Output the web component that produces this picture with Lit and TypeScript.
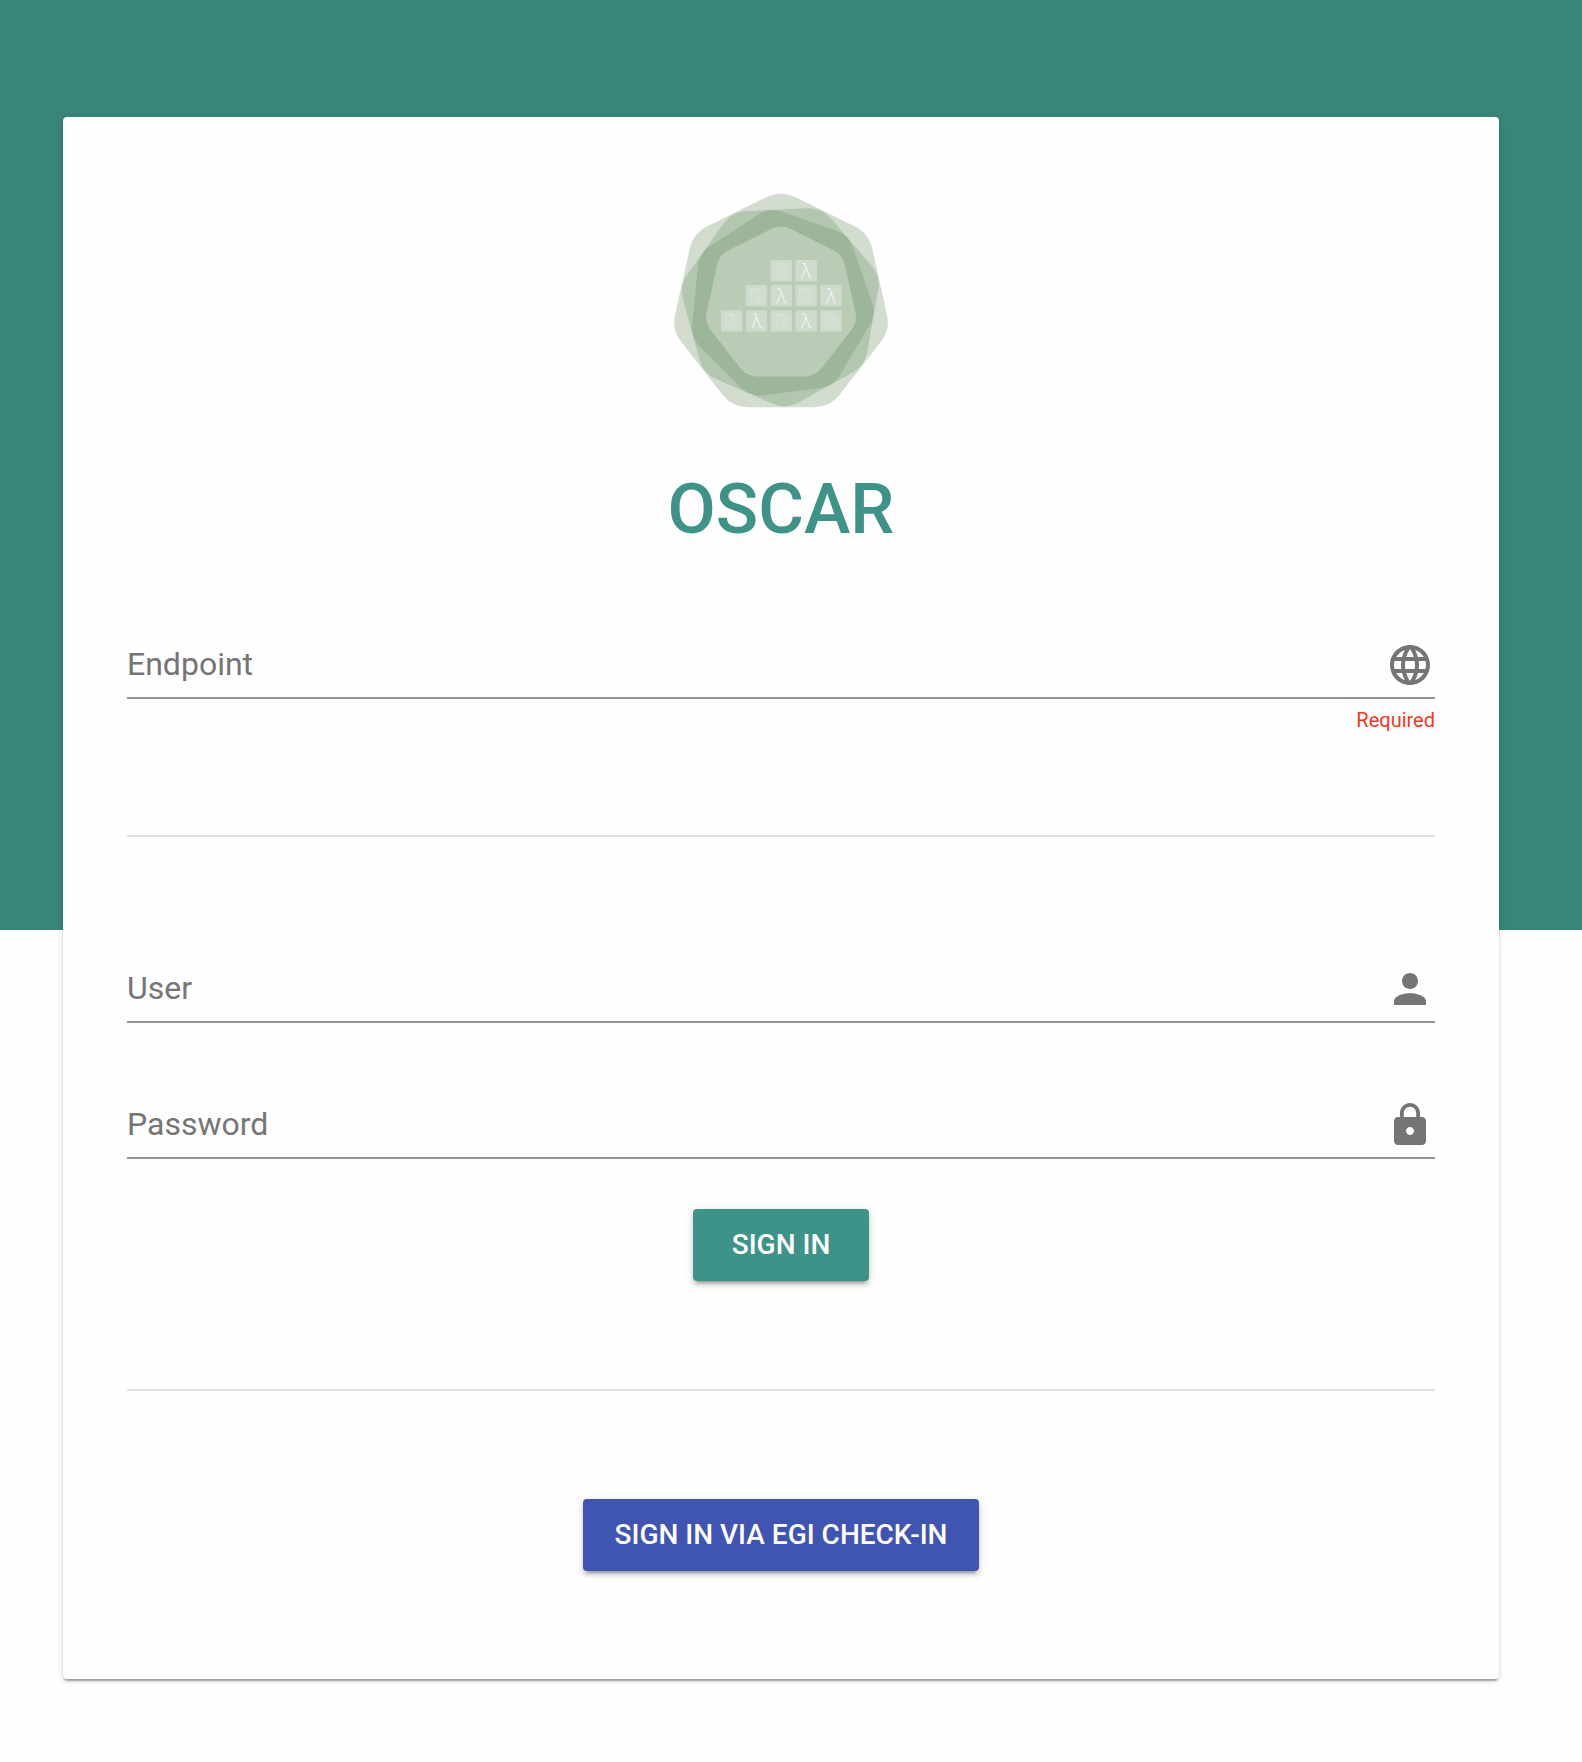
import { LitElement, html, svg, css } from "lit";
import { customElement, property } from "lit/decorators.js";

const GLOBE =
  "M11.99 2C6.47 2 2 6.48 2 12s4.47 10 9.99 10C17.52 22 22 17.52 22 12S17.52 2 11.99 2zm6.93 6h-2.95c-.32-1.25-.78-2.45-1.38-3.56 1.84.63 3.37 1.91 4.33 3.56zM12 4.04c.83 1.2 1.48 2.53 1.91 3.96h-3.82c.43-1.43 1.08-2.76 1.91-3.96zM4.26 14C4.1 13.36 4 12.69 4 12s.1-1.36.26-2h3.38c-.08.66-.14 1.32-.14 2 0 .68.06 1.34.14 2H4.26zm.82 2h2.95c.32 1.25.78 2.45 1.38 3.56-1.84-.63-3.37-1.9-4.33-3.56zm2.95-8H5.08c.96-1.66 2.49-2.93 4.33-3.56C8.81 5.55 8.35 6.75 8.03 8zM12 19.96c-.83-1.2-1.48-2.53-1.91-3.96h3.82c-.43 1.43-1.08 2.76-1.91 3.96zM14.34 14H9.66c-.09-.66-.16-1.32-.16-2 0-.68.07-1.35.16-2h4.68c.09.65.16 1.32.16 2 0 .68-.07 1.34-.16 2zm.25 5.56c.6-1.11 1.06-2.31 1.38-3.56h2.95c-.96 1.65-2.49 2.93-4.33 3.56zM16.36 14c.08-.66.14-1.32.14-2 0-.68-.06-1.34-.14-2h3.38c.16.64.26 1.31.26 2s-.1 1.36-.26 2h-3.38z";
const PERSON =
  "M12 12c2.21 0 4-1.79 4-4s-1.79-4-4-4-4 1.79-4 4 1.79 4 4 4zm0 2c-2.67 0-8 1.34-8 4v2h16v-2c0-2.66-5.33-4-8-4z";
const LOCK =
  "M18 8h-1V6c0-2.76-2.24-5-5-5S7 3.24 7 6v2H6c-1.1 0-2 .9-2 2v10c0 1.1.9 2 2 2h12c1.1 0 2-.9 2-2V10c0-1.1-.9-2-2-2zm-6 9c-1.1 0-2-.9-2-2s.9-2 2-2 2 .9 2 2-.9 2-2 2zm3.1-9H8.9V6c0-1.71 1.39-3.1 3.1-3.1 1.71 0 3.1 1.39 3.1 3.1v2z";

/** Corner points of a regular heptagon, turned by `turn` degrees. */
const heptagon = (radius: number, turn: number): string =>
  Array.from({ length: 7 }, (_, i) => {
    const a = ((i * 360) / 7 + turn - 90) * (Math.PI / 180);
    return `${(363 + radius * 0.975 * Math.cos(a)).toFixed(1)},${(373 + radius * Math.sin(a)).toFixed(1)}`;
  }).join(" ");

/** Stacked rounded heptagons: corner circle, rounding, turn, colour. */
const LAYERS: Array<[number, number, number, string]> = [
  [236, 96, 0, "#6e926a"],
  [219, 87, 23, "#6e926a"],
  [203, 81, -7, "#6e926a"],
  [170, 63, 0, "#fffff8"],
];

/** Tile rows of the pyramid: first column, top, and what each tile shows. */
const ROWS: Array<[number, number, string]> = [
  [2, 240, "dl"],
  [1, 315, "dldl"],
  [0, 391, "dldld"],
];

@customElement("oscar-logo")
export class OscarLogo extends LitElement {
  static styles = css`
    :host {
      display: block;
    }
    .logo {
      display: block;
      width: 214px;
      height: 214px;
      overflow: visible;
    }
    .lambda {
      font-family: "Open Sans", "Noto Sans", sans-serif;
      font-size: 58px;
      font-weight: 300;
      fill: #ffffff;
      opacity: 0.8;
      text-anchor: middle;
    }
  `;

  private tile(x: number, y: number, kind: string) {
    return svg`
      <g transform="translate(${x} ${y})">
        <rect width="64" height="64" fill="#ffffff" opacity="0.3"></rect>
        ${
          kind === "l"
            ? svg`<text class="lambda" x="32" y="53">λ</text>`
            : svg`<g fill="none" stroke="#ffffff" stroke-width="2" opacity="0.36">
                <path d="M19 48h-3l-4-4V14q0-4 4-4h17l5 4"></path>
                <path d="M25 52h-3l-4-4V19q0-4 4-4h18l5 5"></path>
                <path d="M28 18h17l7 7v25q0 4-4 4H32q-4 0-4-4V18z"></path>
                <path d="M33 28h14M33 34h14M33 40h14M33 46h14"></path>
              </g>`
        }
      </g>`;
  }

  render() {
    return html`
      <svg class="logo" viewBox="42 42 642 642" role="img" aria-label="OSCAR">
        ${LAYERS.map(
          ([radius, round, turn, colour]) => svg`
            <g opacity="0.3">
              <polygon
                points=${heptagon(radius, turn)}
                fill=${colour}
                stroke=${colour}
                stroke-width=${round * 2}
                stroke-linejoin="round"
              ></polygon>
            </g>`
        )}
        ${ROWS.map(([col, y, kinds]) =>
          [...kinds].map((kind, i) => this.tile(183 + (col + i) * 74.5, y, kind))
        )}
      </svg>
    `;
  }
}

@customElement("line-field")
export class LineField extends LitElement {
  static styles = css`
    :host {
      display: block;
      color: #757575;
    }
    .row {
      display: flex;
      align-items: center;
      height: 64px;
      border-bottom: 2px solid #949494;
    }
    .box {
      flex: 1;
      display: grid;
      padding-bottom: 2px;
    }
    .label,
    .input {
      grid-area: 1 / 1;
      font: 400 32px/40px Roboto, sans-serif;
    }
    .label {
      pointer-events: none;
    }
    .input {
      width: 100%;
      box-sizing: border-box;
      margin: 0;
      padding: 0;
      border: 0;
      outline: 0;
      background: none;
      color: #212121;
    }
    .input:focus + .label,
    .input:not(:placeholder-shown) + .label {
      visibility: hidden;
    }
    .icon {
      width: 48px;
      height: 48px;
      margin-right: 1px;
      fill: currentColor;
    }
    .message {
      margin-top: 9px;
      font: 400 20px/24px Roboto, sans-serif;
      color: #f03a1f;
      text-align: right;
    }
  `;

  @property() label = "";
  @property() type = "text";
  @property() icon = "";
  @property() message = "";

  render() {
    return html`
      <div class="row">
        <div class="box">
          <input class="input" id="input" type=${this.type} placeholder=" " />
          <label class="label" for="input">${this.label}</label>
        </div>
        <svg class="icon" viewBox="0 0 24 24" aria-hidden="true"><path d=${this.icon}></path></svg>
      </div>
      ${this.message ? html`<div class="message">${this.message}</div>` : ""}
    `;
  }
}

@customElement("app-root")
export class AppRoot extends LitElement {
  static styles = css`
    :host {
      display: block;
      box-sizing: border-box;
      min-height: 100vh;
      padding: 117px 83px 83px 63px;
      background: #fefefe linear-gradient(#37867a, #37867a) no-repeat 0 0 / 100% 930px;
      font-family: Roboto, sans-serif;
    }
    .card {
      display: flex;
      flex-direction: column;
      align-items: center;
      padding: 77px 64px 108px;
      border-radius: 4px;
      background: #fefefe;
      box-shadow: 0 4px 2px -2px rgba(0, 0, 0, 0.2), 0 2px 2px rgba(0, 0, 0, 0.14),
        0 2px 6px rgba(0, 0, 0, 0.12);
    }
    .title {
      margin: 61px 0 84px;
      font-size: 70px;
      line-height: 80px;
      font-weight: 500;
      color: #3e9388;
    }
    .form {
      align-self: stretch;
      display: flex;
      flex-direction: column;
      align-items: center;
    }
    .field,
    .divider {
      align-self: stretch;
    }
    .divider {
      height: 2px;
      margin: 103px 0 120px;
      border: 0;
      background: #e0e0e0;
    }
    .password {
      margin-top: 70px;
    }
    .button {
      height: 72px;
      border: 0;
      border-radius: 4px;
      padding: 0 32px;
      font: 500 28px/40px Roboto, sans-serif;
      color: #ffffff;
      cursor: pointer;
      box-shadow: 0 6px 2px -4px rgba(0, 0, 0, 0.2), 0 4px 4px rgba(0, 0, 0, 0.14),
        0 2px 10px rgba(0, 0, 0, 0.12);
    }
    .submit {
      min-width: 176px;
      margin-top: 50px;
      background: #3e9388;
    }
    .checkin {
      background: #4054b2;
    }
    .lower {
      margin: 108px 0;
    }
  `;

  render() {
    return html`
      <main class="card">
        <oscar-logo></oscar-logo>
        <h1 class="title">OSCAR</h1>
        <form class="form" @submit=${(e: Event) => e.preventDefault()}>
          <line-field class="field" label="Endpoint" .icon=${GLOBE} message="Required"></line-field>
          <hr class="divider" />
          <line-field class="field" label="User" .icon=${PERSON}></line-field>
          <line-field class="field password" label="Password" type="password" .icon=${LOCK}></line-field>
          <button class="button submit" type="submit">SIGN IN</button>
          <hr class="divider lower" />
          <button class="button checkin" type="button">SIGN IN VIA EGI CHECK-IN</button>
        </form>
      </main>
    `;
  }
}
